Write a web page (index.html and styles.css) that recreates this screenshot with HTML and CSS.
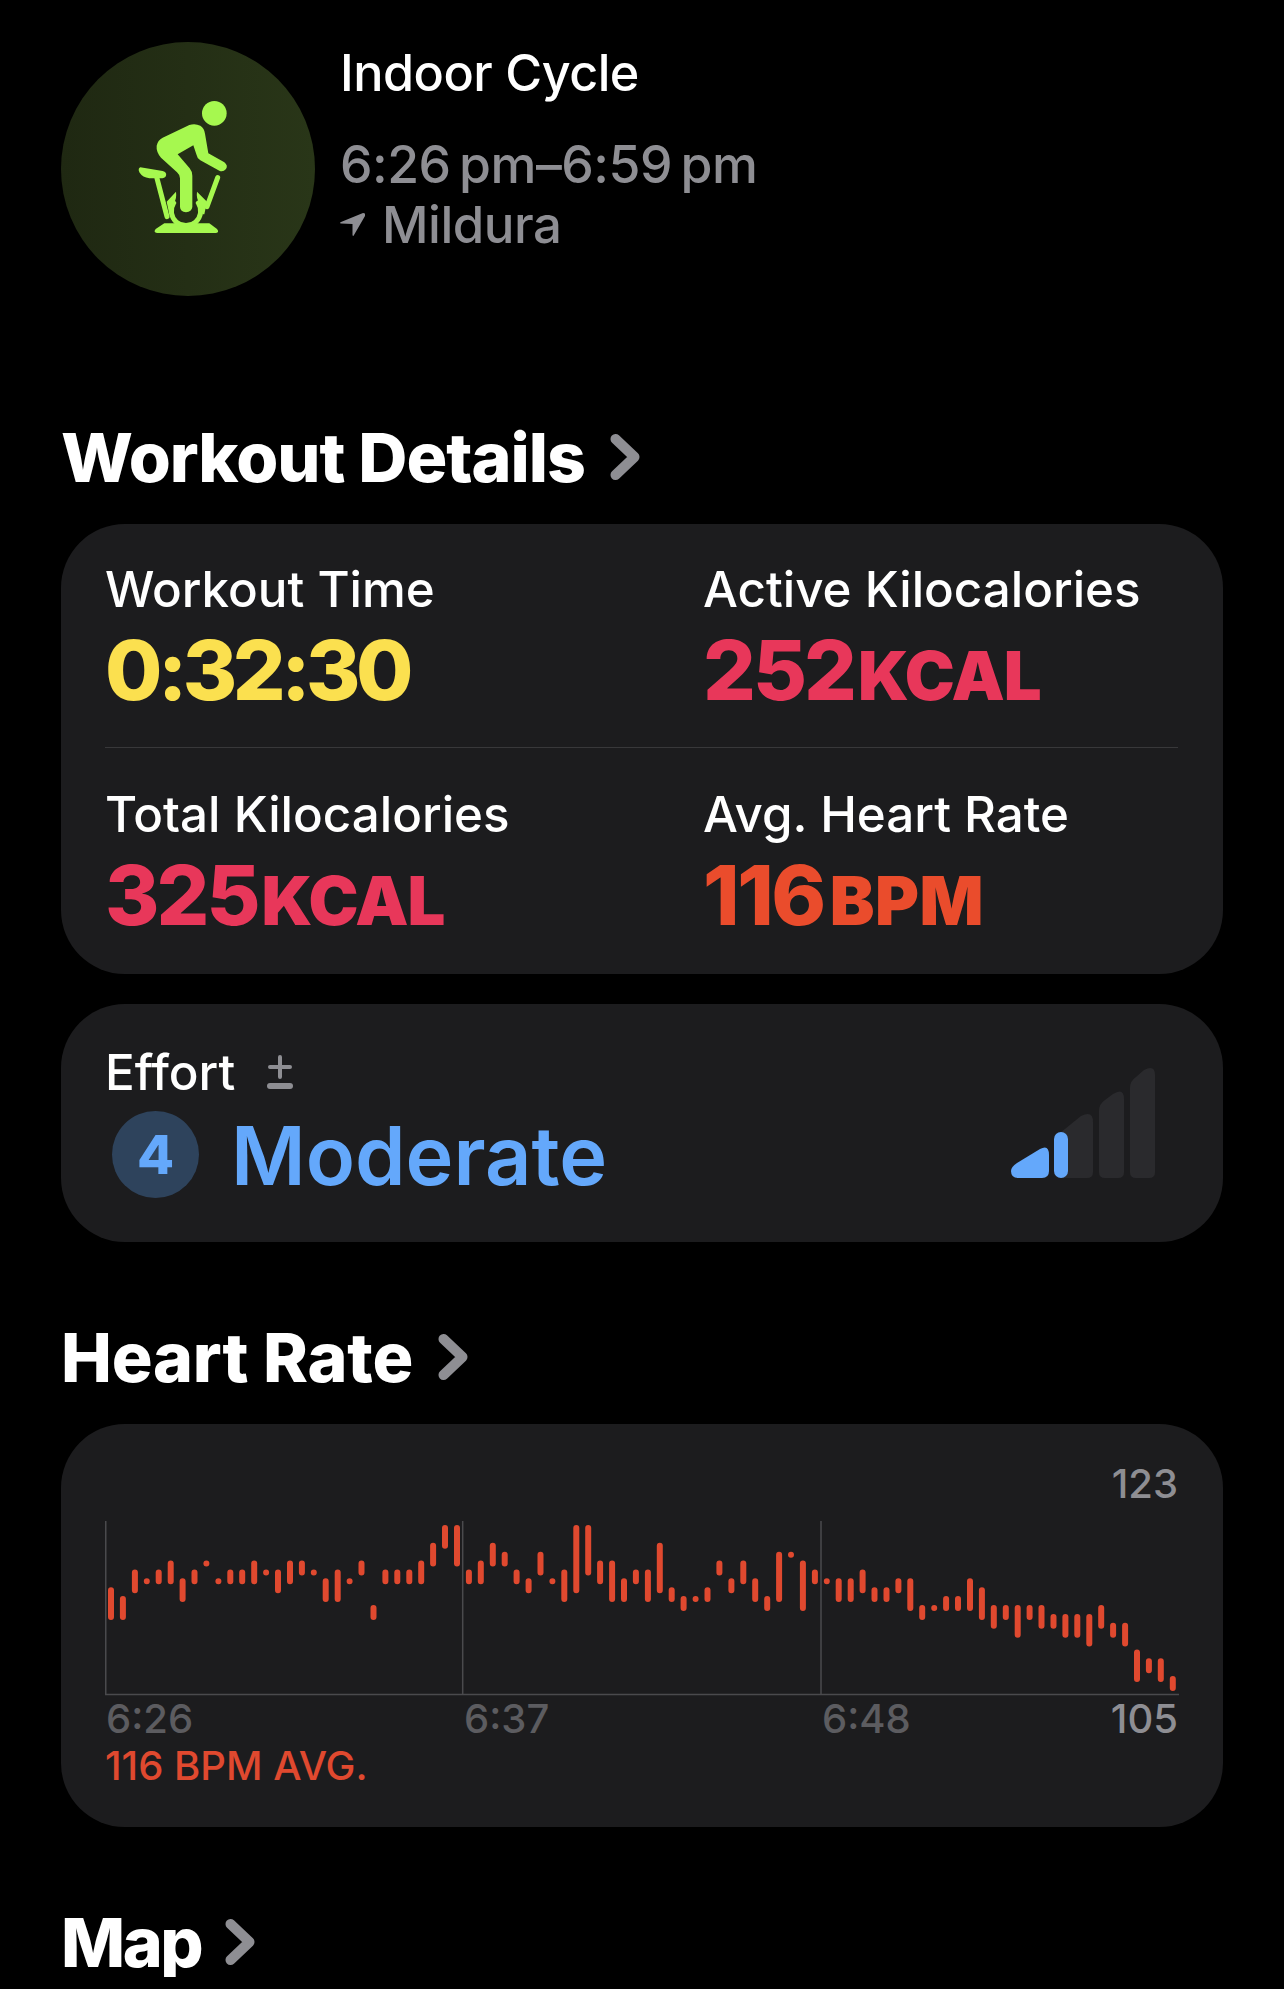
FILE: index.html
```html
<!DOCTYPE html>
<html lang="en">
<head>
    <meta charset="UTF-8">
    <meta name="viewport" content="width=device-width, initial-scale=1.0">
    <title>Indoor Cycle</title>
    <link rel="stylesheet" href="styles.css">
</head>
<body>

    <div class="page">
        <header class="workout">
            <div class="workout-icon">
                <svg viewBox="-180 -129 762 762" width="254" height="254">
                    <g fill="#a6f84f">
                        <circle cx="280" cy="85" r="37"/>
                        <path d="M205 120Q222 114 238 122Q250 130 252 146L262 205L310 232Q322 242 315 252Q306 262 295 257L238 226Q228 220 226 208L217 181L170 208L206 250Q214 260 214 272L214 366Q212 381 195 382Q178 381 177 366L177 280Q177 270 168 262L120 218Q105 200 107 182Q110 166 125 158Z"/>
                        <path d="M58 247L125 258Q138 262 135 272Q132 280 118 280L85 280Q65 278 55 262Q50 250 58 247Z"/>
                        <path d="M137 350L165 320Q168 342 158 354L150 388L145 388Z"/>
                        <path d="M258 350L228 320Q225 342 236 354L245 388L250 388Z"/>
                        <path d="M130 415L265 415L288 432Q296 443 285 444L108 444Q96 443 104 432Z"/>
                    </g>
                    <g fill="none" stroke="#a6f84f" stroke-width="15" stroke-linecap="round">
                        <path d="M108 280L138 395"/>
                        <path d="M290 278L258 365"/>
                        <path d="M158 354A44 44 0 1 0 232 354"/>
                    </g>
                </svg>
            </div>
            <div class="workout-info">
                <div class="workout-name">Indoor Cycle</div>
                <div class="workout-time">6:26&thinsp;pm–6:59&thinsp;pm</div>
                <div class="workout-place">
                    <svg viewBox="0 0 25 24" width="25" height="24"><path fill="#8e8e93" d="M23 0Q26 0 25 3L14 22Q13 24 12.500 22L12.500 11L1 10.500Q-1 10 1 9Z"/></svg>
                    <span>Mildura</span>
                </div>
            </div>
        </header>

        <h2 class="section-title">Workout Details
            <svg class="chevron" viewBox="0 0 30 46" width="30" height="46"><path d="M5.500 5L24.500 23L5.500 41"/></svg>
        </h2>
        <section class="card details">
            <div class="metric">
                <div class="label">Workout Time</div>
                <div class="value time">0:32:30</div>
            </div>
            <div class="metric">
                <div class="label">Active Kilocalories</div>
                <div class="value kcal">252<span class="unit">KCAL</span></div>
            </div>
            <div class="divider"></div>
            <div class="metric">
                <div class="label">Total Kilocalories</div>
                <div class="value kcal">325<span class="unit">KCAL</span></div>
            </div>
            <div class="metric">
                <div class="label">Avg. Heart Rate</div>
                <div class="value bpm">116<span class="unit">BPM</span></div>
            </div>
        </section>

        <section class="card effort">
            <div>
                <div class="label effort-label">Effort
                    <svg viewBox="0 0 26 34" width="26" height="34"><path d="M13 2V22M3 12H23" stroke-width="4"/><path d="M3 31H23" stroke-width="6"/></svg>
                </div>
                <div class="effort-row">
                    <div class="effort-badge">4</div>
                    <div class="effort-text">Moderate</div>
                </div>
            </div>
            <svg class="effort-scale" viewBox="0 0 144 111" width="144" height="111">
                <g fill="#2a2a2d">
                    <path d="M49 66L70 49Q82 43 82 55L82 105Q82 111 76 111L49 111Z"/>
                    <path d="M88 44Q88 37 94 33L102 27Q113 20 113 32L113 105Q113 111 107 111L94 111Q88 111 88 105Z"/>
                    <path d="M119 21Q119 14 125 10L133 3Q144 -3 144 8L144 105Q144 111 138 111L125 111Q119 111 119 105Z"/>
                </g>
                <g fill="#64a8fb">
                    <path d="M6 96L29 82Q38 77 38 88L38 104Q38 111 31 111L7 111Q0 111 0 104Q0 100 6 96Z"/>
                    <rect x="43" y="65" width="14" height="46" rx="7"/>
                </g>
            </svg>
        </section>

        <h2 class="section-title heart-title">Heart Rate
            <svg class="chevron" viewBox="0 0 30 46" width="30" height="46"><path d="M5.500 5L24.500 23L5.500 41"/></svg>
        </h2>
        <section class="card heart">
            <div class="chart-max">123</div>
            <svg class="chart" viewBox="0 0 1075 175" width="1075" height="175">
                <path class="chart-grid" d="M0.750 0V173M357.700 0V173M716 0V173M0 173.500H1074"/>
                <path class="chart-bars" d="M6 69.2V95.9M17.9 78.1V95.9M29.9 51.4V69.2M41.8 60.3V60.3M53.7 51.4V60.3M65.7 42.6V60.3M77.6 60.3V78.1M89.5 51.4V60.3M101.4 42.6V42.6M113.4 60.3V60.3M125.3 51.4V60.3M137.2 51.4V60.3M149.2 42.6V60.3M161.1 51.4V51.4M173 51.4V69.2M185 42.6V60.3M196.9 42.6V51.4M208.8 51.4V51.4M220.7 60.3V78.1M232.7 51.4V78.1M244.6 60.3V60.3M256.5 42.6V51.4M268.5 87V95.9M280.4 51.4V60.3M292.3 51.4V60.3M304.3 51.4V60.3M316.2 42.6V60.3M328.1 24.8V42.6M340 7V24.8M352 7V42.6M363.9 51.4V60.3M375.8 42.6V60.3M387.8 24.8V42.6M399.7 33.7V42.6M411.6 51.4V60.3M423.6 60.3V69.2M435.5 33.7V51.4M447.4 60.3V60.3M459.3 51.4V78.1M471.3 7V69.2M483.2 7V51.4M495.1 42.6V60.3M507.1 42.6V78.1M519 60.3V78.1M530.9 51.4V60.3M542.9 51.4V78.1M554.8 24.8V69.2M566.7 69.2V78.1M578.6 78.1V87M590.6 78.1V78.1M602.5 69.2V78.1M614.4 42.6V51.4M626.4 60.3V69.2M638.3 42.6V60.3M650.2 60.3V78.1M662.2 78.1V87M674.1 33.7V78.1M686 33.7V33.7M697.9 42.6V87M709.9 51.4V60.3M721.8 60.3V60.3M733.7 60.3V78.1M745.7 60.3V78.1M757.6 51.4V69.2M769.5 69.2V78.1M781.5 69.2V78.1M793.4 60.3V69.2M805.3 60.3V87M817.2 87V95.9M829.2 87V87M841.1 78.1V87M853 78.1V87M865 60.3V87M876.9 69.2V95.9M888.8 87V104.8M900.8 87V95.9M912.7 87V113.7M924.6 87V95.9M936.5 87V104.8M948.5 95.9V104.8M960.4 95.9V113.7M972.3 95.9V113.7M984.3 95.9V122.6M996.2 87V104.8M1008.1 104.8V113.7M1020.1 104.8V122.6M1032 131.5V158.1M1043.9 140.3V149.2M1055.8 140.3V158.1M1067.8 158.1V167"/>
            </svg>
            <div class="chart-axis">
                <span>6:26</span>
                <span>6:37</span>
                <span>6:48</span>
                <span class="chart-min">105</span>
            </div>
            <div class="chart-avg">116 BPM AVG.</div>
        </section>

        <h2 class="section-title map-title">Map
            <svg class="chevron" viewBox="0 0 30 46" width="30" height="46"><path d="M5.500 5L24.500 23L5.500 41"/></svg>
        </h2>
    </div>

</body>
</html>
```

FILE: styles.css
```css
body {
    font-family: Inter, "Noto Sans", sans-serif;
    background-color: #000;
    color: #fff;
    margin: 0;
}
.page {
    padding: 42px 61px 0;
}

/* top block */
.workout {
    display: flex;
    gap: 25px;
}
.workout-icon {
    width: 254px;
    height: 254px;
    border-radius: 50%;
    background: linear-gradient(90deg, #1f2812, #293618);
    flex-shrink: 0;
}
.workout-icon svg {
    display: block;
}
.workout-info {
    padding-top: 1px;
}
.workout-name {
    font-size: 50.3px;
    font-weight: 500;
    line-height: 60px;
    letter-spacing: -0.5px;
}
.workout-time {
    font-size: 51.7px;
    font-weight: 500;
    line-height: 60px;
    color: #8e8e93;
    margin-top: 31px;
    letter-spacing: -0.5px;
}
.workout-place {
    display: flex;
    align-items: center;
    gap: 17px;
    font-size: 51px;
    font-weight: 500;
    line-height: 60px;
    color: #8e8e93;
    letter-spacing: -0.5px;
    margin-top: 1px;
}

/* section headings */
.section-title {
    display: flex;
    align-items: center;
    gap: 25px;
    font-size: 68px;
    font-weight: 800;
    line-height: 70px;
    letter-spacing: -1px;
    margin: 126px 0 32px;
}
.heart-title {
    margin-top: 80px;
    letter-spacing: -0.2px;
}
.map-title {
    margin: 80px 0 0;
    letter-spacing: -2.5px;
    gap: 24px;
}
.chevron {
    fill: none;
    stroke: #8e8e93;
    stroke-width: 10;
    stroke-linecap: round;
    stroke-linejoin: round;
}

/* cards */
.card {
    background: #1c1c1e;
    border-radius: 64px;
    padding: 37px 45px 37px 44px;
}
.label {
    font-size: 49.3px;
    font-weight: 500;
    line-height: 56px;
}
.value {
    font-size: 83px;
    font-weight: 800;
    line-height: 84px;
    margin-top: 11px;
    letter-spacing: -3px;
}
.unit {
    font-size: 67px;
    font-weight: 900;
    line-height: 1;
    letter-spacing: -1px;
    margin-left: 4px;
}
.time {
    color: #fbe04f;
    letter-spacing: -4.500px;
}
.kcal {
    color: #e8375a;
}
.bpm {
    color: #ea4c2c;
    letter-spacing: -2.500px;
}
.bpm .unit {
    letter-spacing: 0.5px;
    margin-left: 6px;
}

.details {
    display: grid;
    grid-template-columns: 598px 1fr;
}
.divider {
    grid-column: 1 / 3;
    height: 1px;
    background: #38383a;
    margin: 35px 0 38px;
}

.effort {
    display: flex;
    justify-content: space-between;
    align-items: flex-end;
    margin-top: 30px;
    padding-top: 40px;
    padding-bottom: 44px;
}
.effort-label {
    display: flex;
    align-items: center;
    gap: 32px;
}
.effort-label svg {
    fill: none;
    stroke: #8e8e93;
    stroke-linecap: round;
}
.effort-row {
    display: flex;
    align-items: center;
    gap: 32px;
    margin: 11px 0 0 7px;
}
.effort-badge {
    width: 87px;
    height: 87px;
    border-radius: 50%;
    background: #2e435c;
    color: #64a8fb;
    font-size: 54px;
    font-weight: 800;
    line-height: 87px;
    text-align: center;
}
.effort-text {
    font-size: 81px;
    font-weight: 600;
    line-height: 83px;
    color: #64a8fb;
    padding-top: 4px;
}
.effort-scale {
    margin: 0 23px 20px 0;
    overflow: visible;
}

.heart {
    padding-bottom: 39px;
    padding-top: 38px;
}
.chart-max {
    font-size: 40px;
    font-weight: 500;
    line-height: 44px;
    color: #8e8e93;
    text-align: right;
}
.chart {
    display: block;
    margin-top: 15px;
}
.chart-grid {
    fill: none;
    stroke: #4a4a4d;
    stroke-width: 1.5;
}
.chart-bars {
    fill: none;
    stroke: #e0492f;
    stroke-width: 6;
    stroke-linecap: round;
}
.chart-axis {
    display: grid;
    grid-template-columns: 358px 358px 1fr auto;
    font-size: 40px;
    font-weight: 500;
    line-height: 44px;
    color: #5c5c60;
    margin-top: 1px;
    padding-left: 1px;
}
.chart-min {
    color: #8e8e93;
}
.chart-avg {
    font-size: 40px;
    font-weight: 500;
    line-height: 44px;
    color: #e0492f;
    margin-top: 3px;
}
```
